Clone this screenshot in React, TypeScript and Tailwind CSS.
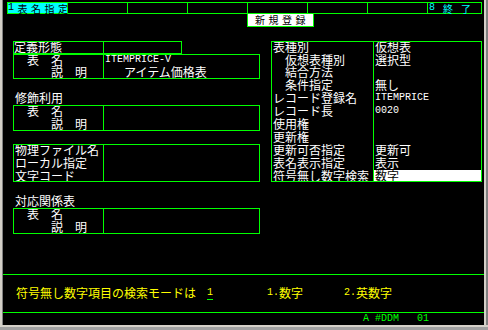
const ROW = [
  'row-start-1', 'row-start-2', 'row-start-3', 'row-start-4', 'row-start-5',
  'row-start-6', 'row-start-7', 'row-start-8', 'row-start-9', 'row-start-10',
  'row-start-11', 'row-start-12', 'row-start-13', 'row-start-14', 'row-start-15',
  'row-start-16', 'row-start-17', 'row-start-18', 'row-start-19', 'row-start-20',
  'row-start-21', 'row-start-22', 'row-start-23', 'row-start-24', 'row-start-25',
];

// half-width runs in a 6px mono cell, the rest in the CJK face
function T({ s }: { s: string }) {
  const parts = s.split(/([\x20-\x7e]+)/).filter((p) => p !== '');
  return (
    <>
      {parts.map((p, i) =>
        /^[\x20-\x7e]+$/.test(p) ? (
          <span key={i} className="whitespace-pre font-['Liberation_Mono',monospace] text-[10px] leading-none align-[3px]">
            {p}
          </span>
        ) : (
          <span key={i} className="whitespace-pre">
            {p}
          </span>
        ),
      )}
    </>
  );
}

// terminal row r -> grid row r + 1
function Left({ r, s, pl = 'pl-[2px]' }: { r: number; s: string; pl?: string }) {
  return (
    <div className={`${ROW[r]} col-start-3 col-span-40 ${pl}`}>
      <T s={s} />
    </div>
  );
}

function LeftVal({ r, s, pl = 'pl-[2px]' }: { r: number; s: string; pl?: string }) {
  return (
    <div className={`${ROW[r]} col-start-18 col-span-26 ${pl}`}>
      <T s={s} />
    </div>
  );
}

const right: [string, string][] = [
  ['表種別', '仮想表'],
  ['　仮想表種別', '選択型'],
  ['　結合方法', ''],
  ['　条件指定', '無し'],
  ['レコード登録名', 'ITEMPRICE'],
  ['レコード長', '0020'],
  ['使用権', ''],
  ['更新権', ''],
  ['更新可否指定', '更新可'],
  ['表名表示指定', '表示'],
  ['符号無し数字検索', ''],
];

function Box({ place, label }: { place: string; label: string }) {
  return (
    <div className={`${place} grid ${label} border border-[#00ff00]`}>
      <div />
      <div className="border-l border-[#00ff00]" />
    </div>
  );
}

function Screen() {
  return (
    <div className="grid h-[325px] w-[481px] grid-cols-[4px_repeat(79,6px)_1fr] grid-rows-[repeat(25,12.9px)] content-start whitespace-nowrap bg-black pt-[2px] font-['Noto_Sans_CJK_JP',sans-serif] text-[12px] leading-[12.9px] text-white">
      {/* function key bar */}
      <div className="col-start-2 row-start-1 col-span-79 mr-[-1px] grid h-[12px] grid-cols-[repeat(7,59px)_1fr] gap-px self-start bg-[#00ff00] p-px text-[10px] leading-[8px]">
        <div className="bg-[#00ffff] tracking-[3.5px] text-black">
          <T s="1表名指定" />
        </div>
        <div className="bg-black" />
        <div className="bg-black" />
        <div className="bg-black" />
        <div className="bg-black" />
        <div className="bg-black" />
        <div className="bg-black" />
        <div className="bg-black pl-px tracking-[1px] text-[#00ffff]">
          <T s="8 終 了" />
        </div>
      </div>
      <div className="col-start-42 row-start-2 col-span-11 mr-[-1px] mt-[-1px] h-[13px] self-start border-x border-b border-[#00ff00] bg-white pl-[7px] pt-px text-[10px] leading-[10px] tracking-[3.5px] text-black">
        <T s="新規登録" />
      </div>

      {/* left column text */}
      <Left r={3} s="定義形態" pl="pl-px" />
      <Left r={4} s="　表　名" />
      <LeftVal r={4} s="ITEMPRICE-V" />
      <Left r={5} s="　　　説　明" />
      <LeftVal r={5} s="アイテム価格表" pl="pl-[21px]" />
      <Left r={7} s="修飾利用" />
      <Left r={8} s="　表　名" />
      <Left r={9} s="　　　説　明" />
      <Left r={11} s="物理ファイル名" />
      <Left r={12} s="ローカル指定" />
      <Left r={13} s="文字コード" />
      <Left r={15} s="対応関係表" />
      <Left r={16} s="　表　名" />
      <Left r={17} s="　　　説　明" />

      {/* right column text */}
      {right.map(([label], i) => (
        <div key={'l' + i} className={`${ROW[3 + i]} col-start-46 col-span-17 pl-[2px]`}>
          <T s={label} />
        </div>
      ))}
      {right.map(([, value], i) =>
        value ? (
          <div key={'v' + i} className={`${ROW[3 + i]} col-start-63 col-span-18 pl-[2px]`}>
            <T s={value} />
          </div>
        ) : null,
      )}
      <div className="col-start-63 row-start-14 col-span-18 mb-px ml-px bg-white pl-px text-black">
        <T s="数字" />
      </div>

      {/* boxes */}
      <Box place="col-start-3 row-start-4 col-span-28 mr-[-1px]" label="grid-cols-[89px_1fr]" />
      <Box place="col-start-3 row-start-5 row-span-2 col-span-41 mr-[-1px]" label="grid-cols-[89px_1fr]" />
      <Box place="col-start-3 row-start-9 row-span-2 col-span-41 mr-[-1px]" label="grid-cols-[89px_1fr]" />
      <Box place="col-start-3 row-start-12 row-span-3 col-span-41 mr-[-1px]" label="grid-cols-[89px_1fr]" />
      <Box place="col-start-3 row-start-17 row-span-2 col-span-41 mr-[-1px]" label="grid-cols-[89px_1fr]" />
      <Box place="col-start-46 row-start-4 row-span-11 col-span-35 mr-[-1px]" label="grid-cols-[101px_1fr]" />

      {/* prompt area */}
      <div className="col-span-full row-start-22 mt-px h-px self-start bg-[#00ff00]" />
      <div className="col-span-full row-start-23 flex items-start pl-[13px] pt-px text-[#ffff00]">
        <span>
          <T s="符号無し数字項目の検索モードは" />
        </span>
        <span className="ml-[11px] inline-block h-[13px] w-[6px] border-b border-[#00ff00]">
          <T s="1" />
        </span>
        <span className="ml-[54px]">
          <T s="1.数字" />
        </span>
        <span className="ml-[41px]">
          <T s="2.英数字" />
        </span>
      </div>
      <div className="col-span-full row-start-25 mt-px h-px self-start bg-[#00ff00]" />
      <div className="col-span-full row-start-25 pl-[360px] pt-[2px] text-[#00ff00]">
        <T s="A #DDM   01" />
      </div>
    </div>
  );
}

export default function App() {
  return (
    <div className="flex h-[330px] w-[488px] flex-col bg-[#a0a0a0]">
      <div className="flex h-[325px]">
        <div className="w-[3px] border-r border-[#808080] bg-[#d4d0c8]" />
        <Screen />
        <div className="w-[4px] border-l-2 border-[#d4d0c8] bg-[#808080]" />
      </div>
      <div className="h-[5px] border-t-2 border-[#d4d0c8]" />
    </div>
  );
}
